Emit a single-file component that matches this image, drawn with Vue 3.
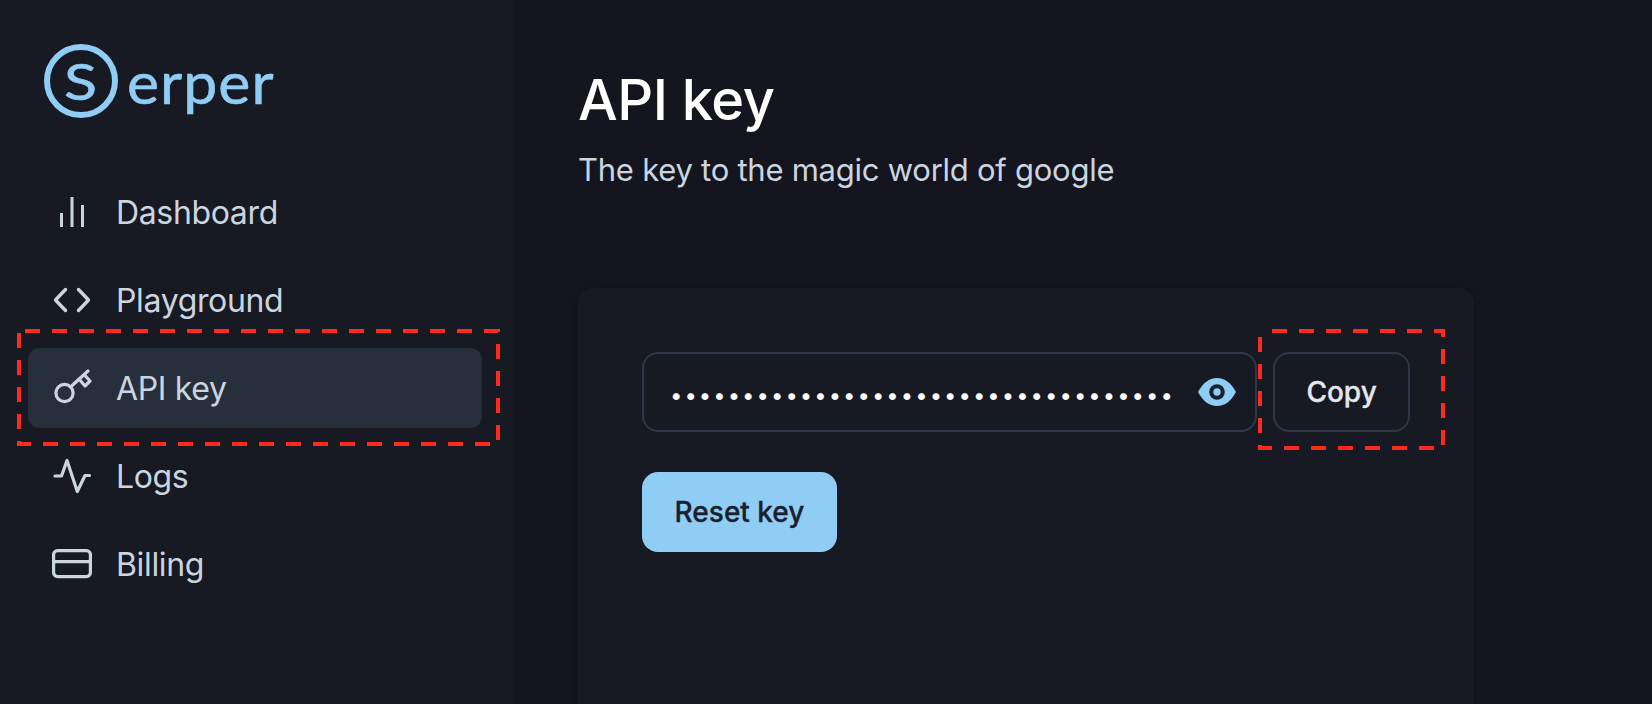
<script setup>
const keyValue = 'x'.repeat(35)
</script>

<template>
  <div class="page">
    <aside class="sidebar">
      <div class="logo">
        <span class="logo-mark"><span class="logo-s">S</span></span>
        <span class="logo-text">erper</span>
      </div>
      <nav class="nav">
        <a class="item">
          <svg class="icon" viewBox="0 0 40 40" fill="none" stroke="currentColor" stroke-width="3">
            <path d="M9.500 35V21M20 35V5M30.500 35V13" />
          </svg>
          <span>Dashboard</span>
        </a>
        <a class="item">
          <svg class="icon" viewBox="0 0 40 40" fill="none" stroke="currentColor" stroke-width="3.400" stroke-linecap="round" stroke-linejoin="round">
            <path d="M13.500 9.500L3.500 20l10 10.500M26.500 9.500L36.500 20l-10 10.500" />
          </svg>
          <span>Playground</span>
        </a>
        <a class="item active">
          <svg class="icon" viewBox="0 0 40 40" fill="none" stroke="currentColor" stroke-width="3.200" stroke-linecap="round" stroke-linejoin="round">
            <circle cx="12.500" cy="25" r="8.600" />
            <path d="M18.500 19L36 3M27 11l6 7 5-5-5-5.500" />
          </svg>
          <span>API key</span>
        </a>
        <a class="item">
          <svg class="icon" viewBox="0 0 40 40" fill="none" stroke="currentColor" stroke-width="3.200" stroke-linecap="round" stroke-linejoin="round">
            <path d="M3 20h6.500L15 4.500l10.300 31L33 19.500h4.500" />
          </svg>
          <span>Logs</span>
        </a>
        <a class="item">
          <svg class="icon" viewBox="0 0 40 40" fill="none" stroke="currentColor" stroke-width="3.200">
            <rect x="1.600" y="6.600" width="36.800" height="26" rx="4" />
            <path d="M1.600 17.700h36.800" />
          </svg>
          <span>Billing</span>
        </a>
      </nav>
    </aside>

    <main class="main">
      <h1 class="title">API key</h1>
      <p class="subtitle">The key to the magic world of google</p>
      <section class="card">
        <div class="key-row">
          <div class="key-field">
            <input class="key-input" type="password" :value="keyValue" readonly />
            <svg class="eye" viewBox="0 0 38 28">
              <path fill="#90cdf4" d="M0 14C5 5 11 0 19 0s14 5 19 14c-5 9-11 14-19 14S5 23 0 14z" />
              <circle cx="19" cy="14" r="7.800" fill="#1a202c" />
              <circle cx="19" cy="14" r="3.700" fill="#90cdf4" />
            </svg>
          </div>
          <button class="copy">Copy</button>
        </div>
        <button class="reset">Reset key</button>
      </section>
    </main>

    <svg class="marks" width="1652" height="704" fill="none" stroke="#ff2a1f" stroke-width="4" stroke-dasharray="15 12">
      <rect x="19" y="331" width="479" height="113" stroke-dashoffset="-6" />
      <rect x="1260" y="331" width="183" height="117" stroke-dashoffset="-12" />
    </svg>
  </div>
</template>

<style>
html, body { margin: 0; background: #14151e; overflow: hidden; }
</style>

<style scoped>
.page {
  position: relative;
  display: flex;
  height: 704px;
  overflow: hidden;
  background: #14151e;
  font-family: Inter, "Liberation Sans", sans-serif;
  color: #cbd5e0;
}
.sidebar {
  box-sizing: border-box;
  width: 516px;
  flex: none;
  padding: 44px 32px 0 28px;
  background: #181a23;
  border-right: 2px solid #14151e;
}
.logo {
  display: flex;
  align-items: center;
  height: 74px;
  margin: 0 0 54px 16px;
  color: #90cdf4;
}
.logo-mark {
  box-sizing: border-box;
  display: flex;
  align-items: center;
  justify-content: center;
  width: 74px;
  height: 74px;
  flex: none;
  border: 6px solid #90cdf4;
  border-radius: 50%;
  font: 400 50px/1 Lato, sans-serif;
}
.logo-s {
  display: inline-block;
  transform: scaleX(1.22);
  -webkit-text-stroke: 0.6px #90cdf4;
}
.logo-text {
  display: inline-block;
  margin-left: 9px;
  font: 400 59px/1 Lato, sans-serif;
  letter-spacing: 1px;
  transform: scaleX(1.03);
  transform-origin: left center;
  -webkit-text-stroke: 0.6px #90cdf4;
}
.nav {
  display: flex;
  flex-direction: column;
  gap: 8px;
}
.item {
  display: flex;
  align-items: center;
  gap: 24px;
  height: 80px;
  padding-left: 24px;
  border-radius: 12px;
  font-size: 32px;
  letter-spacing: -0.35px;
}
.item.active { background: #262f3b; }
.icon { width: 40px; height: 40px; flex: none; }
.main {
  flex: 1;
  padding: 0 0 0 62px;
  min-width: 0;
}
.title {
  margin: 62px 0 0;
  font-size: 56px;
  line-height: 76px;
  font-weight: 500;
  letter-spacing: -0.5px;
  color: #fff;
}
.subtitle {
  margin: 12px 0 0;
  font-size: 31px;
  line-height: 40px;
  letter-spacing: -0.25px;
}
.card {
  box-sizing: border-box;
  width: 896px;
  height: 600px;
  margin-top: 98px;
  padding: 64px;
  border-radius: 16px;
  background: #181a23;
  box-shadow: 0 2px 8px rgba(0, 0, 0, 0.25);
}
.key-row {
  display: flex;
  gap: 16px;
}
.key-field {
  box-sizing: border-box;
  position: relative;
  width: 616px;
  height: 80px;
  border: 2px solid #2d3748;
  border-radius: 16px;
}
.key-input {
  box-sizing: border-box;
  width: 100%;
  height: 100%;
  padding: 6px 60px 0 26px;
  background: none;
  border: 0;
  outline: 0;
  color: #fff;
  font: 400 22px Inter, sans-serif;
  letter-spacing: 2.05px;
}
.eye {
  position: absolute;
  right: 19px;
  top: 24px;
  width: 38px;
  height: 28px;
}
.copy, .reset {
  height: 80px;
  border-radius: 16px;
  font: 500 28px Inter, sans-serif;
  -webkit-text-stroke: 0.3px currentColor;
  cursor: pointer;
}
.copy {
  box-sizing: border-box;
  width: 137px;
  background: none;
  border: 2px solid #2d3748;
  color: #e2e8f0;
}
.reset {
  display: block;
  width: 195px;
  margin-top: 40px;
  border: 0;
  background: #90cdf4;
  color: #1a202c;
}
.marks {
  position: absolute;
  inset: 0;
  pointer-events: none;
}
</style>
